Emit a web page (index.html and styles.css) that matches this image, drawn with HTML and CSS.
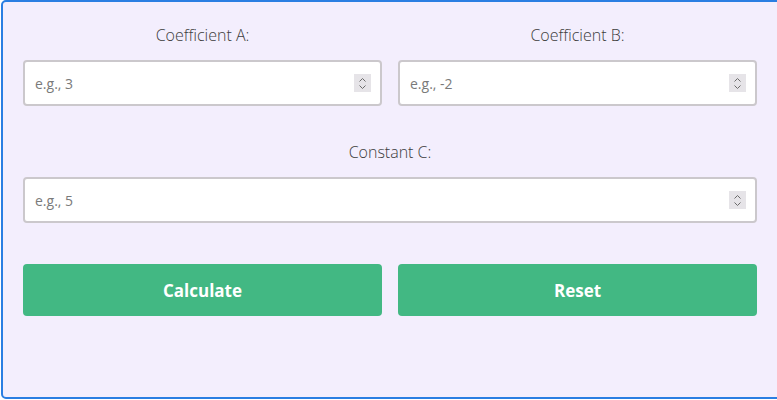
FILE: index.html
```html
<!DOCTYPE html>
<html lang="en">
<head>
    <meta charset="UTF-8">
    <meta name="viewport" content="width=device-width, initial-scale=1.0">
    <title>Linear Equation Calculator</title>
    <link rel="stylesheet" href="styles.css">
</head>
<body>
    <div class="calculator">
        <div class="row">
            <div class="form-group">
                <label for="coefA">Coefficient A:</label>
                <div class="field">
                    <input type="number" id="coefA" placeholder="e.g., 3">
                    <span class="spinner">
                        <svg width="9" height="13" viewBox="0 0 9 13"><path d="M1.5 4.5 L4.5 1.5 L7.5 4.5 M1.5 8.5 L4.5 11.5 L7.5 8.5" fill="none" stroke="#6b6b6b" stroke-width="1"/></svg>
                    </span>
                </div>
            </div>
            <div class="form-group">
                <label for="coefB">Coefficient B:</label>
                <div class="field">
                    <input type="number" id="coefB" placeholder="e.g., -2">
                    <span class="spinner">
                        <svg width="9" height="13" viewBox="0 0 9 13"><path d="M1.5 4.5 L4.5 1.5 L7.5 4.5 M1.5 8.5 L4.5 11.5 L7.5 8.5" fill="none" stroke="#6b6b6b" stroke-width="1"/></svg>
                    </span>
                </div>
            </div>
        </div>

        <div class="form-group">
            <label for="constC">Constant C:</label>
            <div class="field">
                <input type="number" id="constC" placeholder="e.g., 5">
                <span class="spinner">
                    <svg width="9" height="13" viewBox="0 0 9 13"><path d="M1.5 4.5 L4.5 1.5 L7.5 4.5 M1.5 8.5 L4.5 11.5 L7.5 8.5" fill="none" stroke="#6b6b6b" stroke-width="1"/></svg>
                </span>
            </div>
        </div>

        <div class="actions">
            <button class="btn">Calculate</button>
            <button class="btn">Reset</button>
        </div>
    </div>
</body>
</html>
```

FILE: styles.css
```css
* {
    margin: 0;
    padding: 0;
    box-sizing: border-box;
}

body {
    font-family: "Open Sans", "Noto Sans", sans-serif;
    background: #ffffff;
    overflow: hidden;
}

.calculator {
    margin-left: 1px;
    width: 780px;
    height: 399px;
    background: #f3eefd;
    border: 2px solid #2a7ee2;
    border-radius: 5px;
    padding: 21px 22px 20px 20px;
}

.row {
    display: grid;
    grid-template-columns: 1fr 1fr;
    gap: 16px;
}

.form-group {
    margin-bottom: 34px;
}

label {
    display: block;
    text-align: center;
    font-size: 16px;
    font-weight: 300;
    line-height: 24px;
    color: #3c3c3c;
    margin-bottom: 13px;
}

.field {
    position: relative;
}

input[type="number"] {
    width: 100%;
    height: 46px;
    padding: 0 10px;
    border: 2px solid #cbc8cc;
    border-radius: 4px;
    background: #ffffff;
    font-family: "Open Sans", "Noto Sans", sans-serif;
    font-size: 14px;
    color: #333;
    -moz-appearance: textfield;
}

input[type="number"]::placeholder {
    color: #7a7a7a;
}

input[type="number"]::-webkit-inner-spin-button,
input[type="number"]::-webkit-outer-spin-button {
    -webkit-appearance: none;
    margin: 0;
}

.spinner {
    position: absolute;
    right: 11px;
    top: 14px;
    width: 17px;
    height: 18px;
    background: #e6e4e8;
    display: flex;
    align-items: center;
    justify-content: center;
}

.actions {
    display: grid;
    grid-template-columns: 1fr 1fr;
    gap: 16px;
    margin-top: 41px;
}

.btn {
    height: 52px;
    border: none;
    border-radius: 4px;
    background: #42b883;
    color: #ffffff;
    font-family: "Open Sans", "Noto Sans", sans-serif;
    font-size: 17px;
    font-weight: 700;
    cursor: pointer;
}
```
